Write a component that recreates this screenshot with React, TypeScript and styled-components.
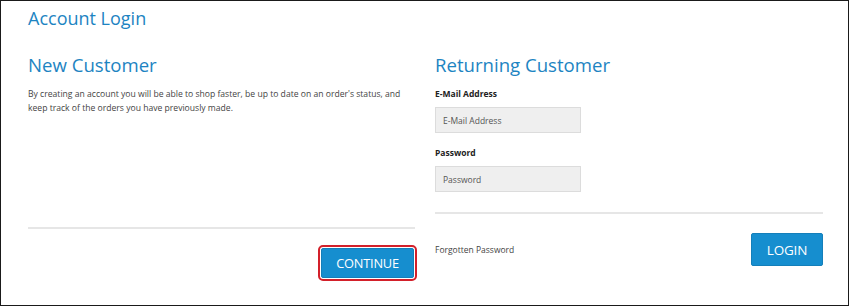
import styled, { createGlobalStyle } from 'styled-components'

const GlobalStyle = createGlobalStyle`
    html, body {
        margin: 0;
        padding: 0;
        background: #fff;
    }
    body {
        font-family: 'Open Sans', 'Noto Sans', sans-serif;
        color: #444;
    }
    * { box-sizing: border-box; }
`

const Frame = styled.div`
    width: 849px;
    height: 306px;
    border: 1px solid #1a1a1a;
    padding: 0 25px 0 27px;
    overflow: hidden;
`

const PageTitle = styled.h1`
    margin: 3px 0 0;
    font-size: 18px;
    line-height: 28px;
    font-weight: 400;
    color: #1d84c2;
`

const Columns = styled.div`
    display: grid;
    grid-template-columns: 387px 388px;
    column-gap: 20px;
    margin-top: 18px;
`

const Column = styled.div`
    display: flex;
    flex-direction: column;
`

const Heading = styled.h2`
    margin: 0;
    font-size: 18.6px;
    line-height: 30px;
    font-weight: 400;
    color: #1d84c2;
`

const Text = styled.p`
    margin: 7px 0 0;
    font-size: 8.6px;
    line-height: 14.3px;
    white-space: nowrap;
    color: #444;
`

const Label = styled.label<{ $top: number }>`
    display: block;
    margin-top: ${p => p.$top}px;
    font-size: 8.5px;
    line-height: 14px;
    font-weight: 700;
    color: #222;
`

const Input = styled.input`
    display: block;
    width: 146px;
    height: 26px;
    margin-top: 6px;
    padding: 0 7px;
    border: 1px solid #dcdcdc;
    background: #efefef;
    font-family: inherit;
    font-size: 8.5px;
    color: #555;
    outline: none;
    &::placeholder { color: #555; }
`

const Divider = styled.hr<{ $top: number }>`
    margin: ${p => p.$top}px 0 0;
    border: 0;
    border-top: 2px solid #e6e6e6;
`

const Footer = styled.div<{ $top: number }>`
    display: flex;
    align-items: center;
    justify-content: space-between;
    margin-top: ${p => p.$top}px;
`

const Link = styled.a`
    font-size: 8.5px;
    color: #444;
    text-decoration: none;
`

const Button = styled.button<{ $w: number; $h: number; $fs: number; $focus?: boolean }>`
    width: ${p => p.$w}px;
    height: ${p => p.$h}px;
    margin-left: auto;
    padding: 0;
    border: 1px solid #147fba;
    border-radius: 2px;
    background: #168ecf;
    color: #fff;
    font-family: inherit;
    font-size: ${p => p.$fs}px;
    letter-spacing: -0.2px;
    cursor: pointer;
    outline: ${p => (p.$focus ? '2px solid #d3202a' : 'none')};
    outline-offset: 1px;
`

export default function App() {
    return (
        <>
            <GlobalStyle />
            <Frame>
                <PageTitle>Account Login</PageTitle>
                <Columns>
                    <Column>
                        <Heading>New Customer</Heading>
                        <Text>
                            By creating an account you will be able to shop faster, be up to date on an order's status, and
                            <br />
                            keep track of the orders you have previously made.
                        </Text>
                        <Divider $top={111} />
                        <Footer $top={19}>
                            <Button $w={93} $h={30} $fs={12.8} $focus style={{ marginRight: 1 }}>CONTINUE</Button>
                        </Footer>
                    </Column>
                    <Column>
                        <Heading>Returning Customer</Heading>
                        <Label $top={7}>E-Mail Address</Label>
                        <Input placeholder="E-Mail Address" />
                        <Label $top={13}>Password</Label>
                        <Input type="password" placeholder="Password" />
                        <Divider $top={20} />
                        <Footer $top={19}>
                            <Link href="#">Forgotten Password</Link>
                            <Button $w={72} $h={33} $fs={13.5}>LOGIN</Button>
                        </Footer>
                    </Column>
                </Columns>
            </Frame>
        </>
    )
}
